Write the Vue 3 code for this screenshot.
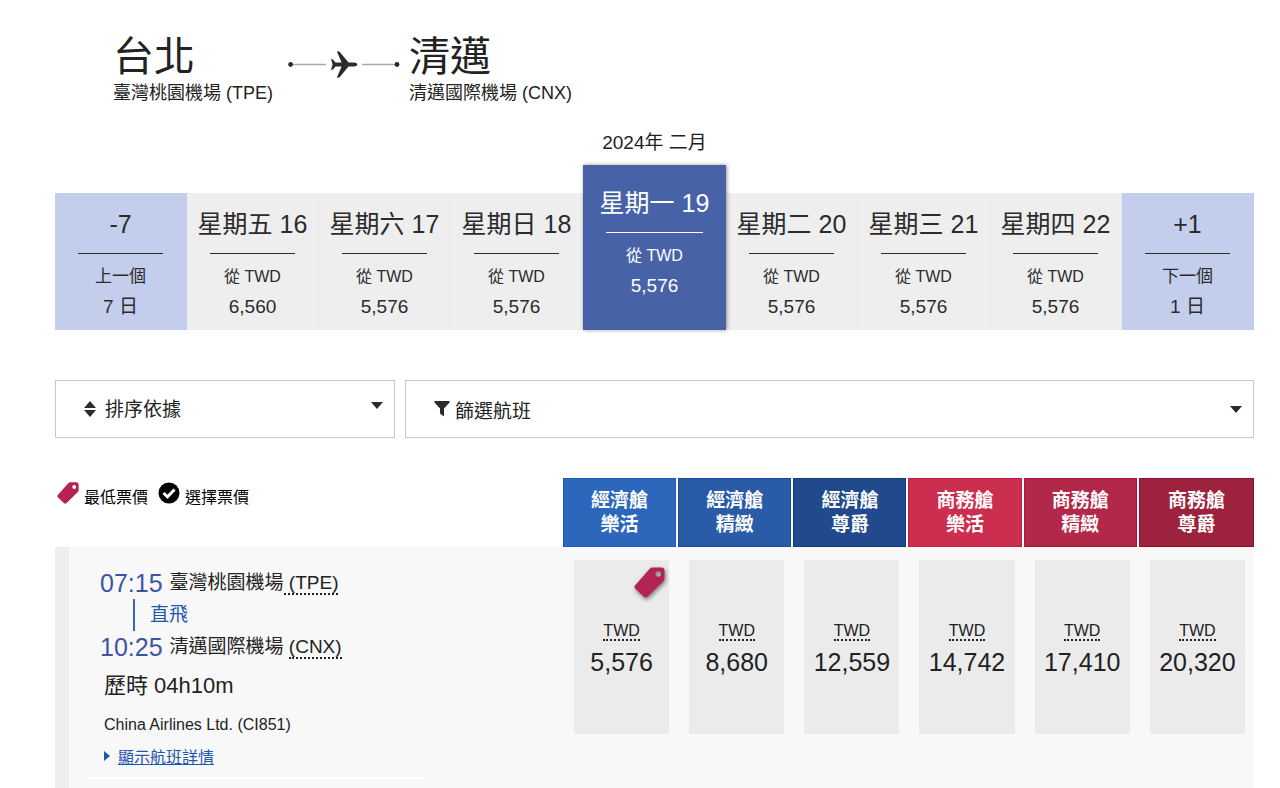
<template>
  <main class="page">
    <header class="route">
      <div class="place">
        <h1>台北</h1>
        <p>臺灣桃園機場 (TPE)</p>
      </div>
      <svg class="route-line" viewBox="0 0 112 28" aria-hidden="true">
        <path d="M3 14.5H38M74 14.5H109" stroke="#aaa" stroke-width="1.5" />
        <circle cx="2.6" cy="14.5" r="2.4" />
        <circle cx="109" cy="14.5" r="2.4" />
        <path d="M69.5 14.5Q69 12.6 66 12.5H60.5L52 2.2Q50.5 .6 49 1.8L53.6 12.5H47.5L45 9.5L43 9L44.6 14.5L43 20L45 19.5L47.5 16.5H53.6L49 27.2Q50.5 28.4 52 26.8L60.5 16.5H66Q69 16.4 69.5 14.5Z" />
      </svg>
      <div class="place">
        <h1>清邁</h1>
        <p>清邁國際機場 (CNX)</p>
      </div>
    </header>

    <p class="month">2024年 二月</p>
    <nav class="calendar" aria-label="選擇日期">
      <button
        v-for="(day, index) in days"
        :key="day.title"
        type="button"
        class="day"
        :class="{ step: day.step, selected: index === selectedDay }"
        @click="selectDay(index)"
      >
        <span class="day-title">{{ day.title }}</span>
        <span class="rule"></span>
        <span class="day-label">{{ day.label }}</span>
        <span class="day-value">{{ day.value }}</span>
      </button>
    </nav>

    <div class="filters">
      <div class="box">
        <svg class="icon-sort" viewBox="0 0 12 16" aria-hidden="true">
          <path d="M6 0L12 7H0ZM6 16L0 9H12Z" />
        </svg>
        <select v-model="sortBy" aria-label="排序依據">
          <option value="">排序依據</option>
        </select>
        <svg class="caret caret-sort" viewBox="0 0 12 7" aria-hidden="true"><path d="M0 0H12L6 7Z" /></svg>
      </div>
      <button type="button" class="box">
        <svg class="icon-filter" viewBox="0 0 16 16" aria-hidden="true">
          <path d="M0.5 0H15.5V1.5L10 7.5V15.5L6 12.5V7.5L0.5 1.5Z" />
        </svg>
        <span class="box-text">篩選航班</span>
        <svg class="caret" viewBox="0 0 12 7" aria-hidden="true"><path d="M0 0H12L6 7Z" /></svg>
      </button>
    </div>

    <table class="flights">
      <colgroup>
        <col class="col-flight" />
        <col v-for="cabin in cabins" :key="cabin.key" />
      </colgroup>
      <thead>
        <tr>
          <td>
            <div class="legend">
              <svg class="icon-legend" viewBox="0 0 64 64" aria-hidden="true">
                <path class="tag" fill-rule="evenodd" :d="tagPath" />
              </svg>
              <span>最低票價</span>
              <svg class="icon-legend" viewBox="0 0 22 22" aria-hidden="true">
                <circle cx="11" cy="11" r="10.5" fill="#000" />
                <path d="M5.5 11L9.5 14.8L16.5 7.5" fill="none" stroke="#fff" stroke-width="3" />
              </svg>
              <span>選擇票價</span>
            </div>
          </td>
          <th v-for="cabin in cabins" :key="cabin.key" scope="col" class="cabin">
            <div :class="cabin.key">{{ cabin.name }}<br />{{ cabin.brand }}</div>
          </th>
        </tr>
      </thead>
      <tbody>
        <tr>
          <td class="flight">
            <p class="leg">
              <time>07:15</time><span>臺灣桃園機場<abbr title="Taipei Taoyuan">&nbsp;(TPE)</abbr></span>
            </p>
            <p class="direct">直飛</p>
            <p class="leg">
              <time>10:25</time><span>清邁國際機場 <abbr title="Chiang Mai">(CNX)</abbr></span>
            </p>
            <p class="duration">歷時 04h10m</p>
            <p class="carrier">China Airlines Ltd. (CI851)</p>
            <p class="details">
              <svg viewBox="0 0 6 10" aria-hidden="true"><path d="M0 0L6 5L0 10Z" /></svg>
              <a href="#">顯示航班詳情</a>
            </p>
          </td>
          <td v-for="cabin in cabins" :key="cabin.key" class="fare-cell">
            <button type="button" class="fare">
              <svg v-if="cabin.lowest" class="fare-tag" viewBox="0 0 64 64" aria-label="最低票價">
                <path class="tag" fill-rule="evenodd" :d="tagPath" />
              </svg>
              <abbr title="新臺幣">TWD</abbr>
              <span>{{ cabin.price }}</span>
            </button>
          </td>
        </tr>
      </tbody>
    </table>
  </main>
</template>

<script setup>
import { ref } from 'vue';

const days = [
  { title: '-7', label: '上一個', value: '7 日', step: true },
  { title: '星期五 16', label: '從 TWD', value: '6,560' },
  { title: '星期六 17', label: '從 TWD', value: '5,576' },
  { title: '星期日 18', label: '從 TWD', value: '5,576' },
  { title: '星期一 19', label: '從 TWD', value: '5,576' },
  { title: '星期二 20', label: '從 TWD', value: '5,576' },
  { title: '星期三 21', label: '從 TWD', value: '5,576' },
  { title: '星期四 22', label: '從 TWD', value: '5,576' },
  { title: '+1', label: '下一個', value: '1 日', step: true },
];

const cabins = [
  { key: 'eco-light', name: '經濟艙', brand: '樂活', price: '5,576', lowest: true },
  { key: 'eco-plus', name: '經濟艙', brand: '精緻', price: '8,680' },
  { key: 'eco-flex', name: '經濟艙', brand: '尊爵', price: '12,559' },
  { key: 'biz-light', name: '商務艙', brand: '樂活', price: '14,742' },
  { key: 'biz-plus', name: '商務艙', brand: '精緻', price: '17,410' },
  { key: 'biz-flex', name: '商務艙', brand: '尊爵', price: '20,320' },
];

const tagPath =
  'M38 1H56Q63 1 63 8V23Q63 27 60 30L28 61Q24 65 20 61L3 45Q-1 41 3 37L32 4Q35 1 38 1ZM50 9A5.5 5.5 0 1 0 50 20A5.5 5.5 0 1 0 50 9Z';

const selectedDay = ref(4);
const sortBy = ref('');

const selectDay = (index) => {
  if (days[index].step) return;
  selectedDay.value = index;
};
</script>

<style>
body { margin: 0; background: #fff; }
</style>

<style scoped>
.page { box-sizing: border-box; min-height: 100vh; padding: 33px 26px 0 55px; font-family: "Liberation Sans", "Noto Sans CJK TC", sans-serif; color: #222; }
h1, p { margin: 0; font-weight: 400; }
button, select { font-family: inherit; color: inherit; cursor: pointer; }
svg { display: block; flex: none; fill: #2b2b2b; }
.tag { fill: #b32454; }

.route { display: grid; grid-template-columns: 175px 112px auto; padding-left: 58px; }
.place h1 { font-size: 41px; line-height: 48px; }
.place p { font-size: 18px; line-height: 24px; white-space: nowrap; }
.place:last-child { padding-left: 9px; }
.route-line { width: 112px; height: 28px; margin-top: 17px; }

.month { margin: 26px 0 10px; font-size: 19px; line-height: 24px; text-align: center; }
.calendar { display: grid; grid-template-columns: repeat(4, 132fr) 143fr repeat(4, 132fr); align-items: end; }
.day { display: flex; flex-direction: column; align-items: stretch; box-sizing: border-box; height: 137px; margin: 0; padding: 16px 0 0; border: 0; border-right: 1px solid #e9e9e9; background: #eee; text-align: center; white-space: nowrap; color: #2b2b2b; }
.day.step { border-color: #bcc9ea; background: #c3ceed; }
.day.selected { position: relative; height: 165px; padding-top: 23px; border: 0; background: #4862a8; box-shadow: 1px 0 4px rgba(0, 0, 0, 0.4); color: #fff; }
.day-title { font-size: 25px; line-height: 30px; }
.rule { height: 1px; margin: 14px 23px 8px; background: currentColor; }
.day-label { font-size: 16px; line-height: 30px; }
.day-value { font-size: 19px; line-height: 30px; }
.step .day-label { font-size: 17px; }

.filters { display: grid; grid-template-columns: 340fr 849fr; gap: 10px; margin-top: 50px; }
.box { display: flex; align-items: center; box-sizing: border-box; height: 58px; padding: 0 11px 0 28px; border: 1px solid #c8c8c8; background: #fff; font-size: 19px; text-align: left; }
.box select { flex: 1; height: 56px; margin-left: 9px; padding: 0; border: 0; background: none; appearance: none; font-size: 19px; }
.box-text { flex: 1; margin-left: 5px; }
.icon-sort { width: 12px; height: 16px; }
.icon-filter { width: 16px; height: 16px; }
.caret { width: 12px; height: 7px; }
.caret-sort { margin-bottom: 8px; }

.flights { width: 100%; margin-top: 40px; border-collapse: separate; border-spacing: 0; table-layout: fixed; }
.flights td, .flights th { padding: 0; vertical-align: top; }
.col-flight { width: 508px; }
.legend { display: flex; align-items: center; gap: 5px; padding: 4px 0 0 2px; font-size: 16px; line-height: 32px; color: #000; }
.legend .icon-legend { width: 22px; height: 22px; margin-bottom: 10px; }
.legend span + .icon-legend { margin-left: 5px; }
.cabin { font-size: 19px; line-height: 24px; color: #fff; }
.cabin div { box-sizing: border-box; height: 69px; margin-right: 2px; padding-top: 10px; border: 1px solid; color: #fff; }
.cabin:last-child div { margin-right: 0; }
.cabin .eco-light { background: #2d67bb; border-color: #1c5ab4; }
.cabin .eco-plus { background: #2a5ba7; border-color: #174c9e; }
.cabin .eco-flex { background: #214a8c; border-color: #103b81; }
.cabin .biz-light { background: #cc2e50; border-color: #c41c42; }
.cabin .biz-plus { background: #b22848; border-color: #a91438; }
.cabin .biz-flex { background: #9c223d; border-color: #8f0f2c; }

.flights tbody { background: #f8f8f8; }
.flights .flight { padding: 20px 0 9px 17px; border-left: 14px solid #eee; }
.flight p { padding-left: 18px; }
.flight .leg { display: flex; align-items: center; gap: 7px; padding-left: 14px; font-size: 19px; line-height: 32px; white-space: nowrap; }
.leg time { font-size: 25px; color: #3c53a4; }
abbr { text-decoration: none; border-bottom: 2px dotted #222; }
.leg abbr { line-height: 20px; }
.flight .direct { margin-left: 47px; padding-left: 15px; border-left: 2px solid #3a66b0; font-size: 19px; line-height: 32px; color: #1f56b0; }
.flight .duration { padding-top: 7px; font-size: 22px; line-height: 32px; }
.flight .carrier { padding-top: 7px; font-size: 16px; line-height: 32px; }
.flight .details { display: flex; align-items: center; gap: 8px; width: 320px; padding: 1px 0 3px 18px; border-bottom: 2px solid #fff; font-size: 16px; line-height: 32px; }
.details svg { width: 6px; height: 10px; margin-bottom: 4px; fill: #1f56b0; }
.details a { color: #1f56b0; }

.flights .fare-cell { padding: 13px 9px 0 11px; }
.fare { position: relative; display: flex; flex-direction: column; align-items: center; box-sizing: border-box; width: 100%; height: 174px; padding: 62px 0 0; border: 0; background: #ebebeb; }
.fare abbr { font-size: 16px; line-height: 17px; }
.fare span { margin-top: 5px; font-size: 25px; line-height: 32px; }
.fare-tag { position: absolute; top: 7px; right: 4px; width: 31px; height: 31px; overflow: visible; filter: drop-shadow(1px 2px 2px rgba(0, 0, 0, 0.5)); }
</style>
